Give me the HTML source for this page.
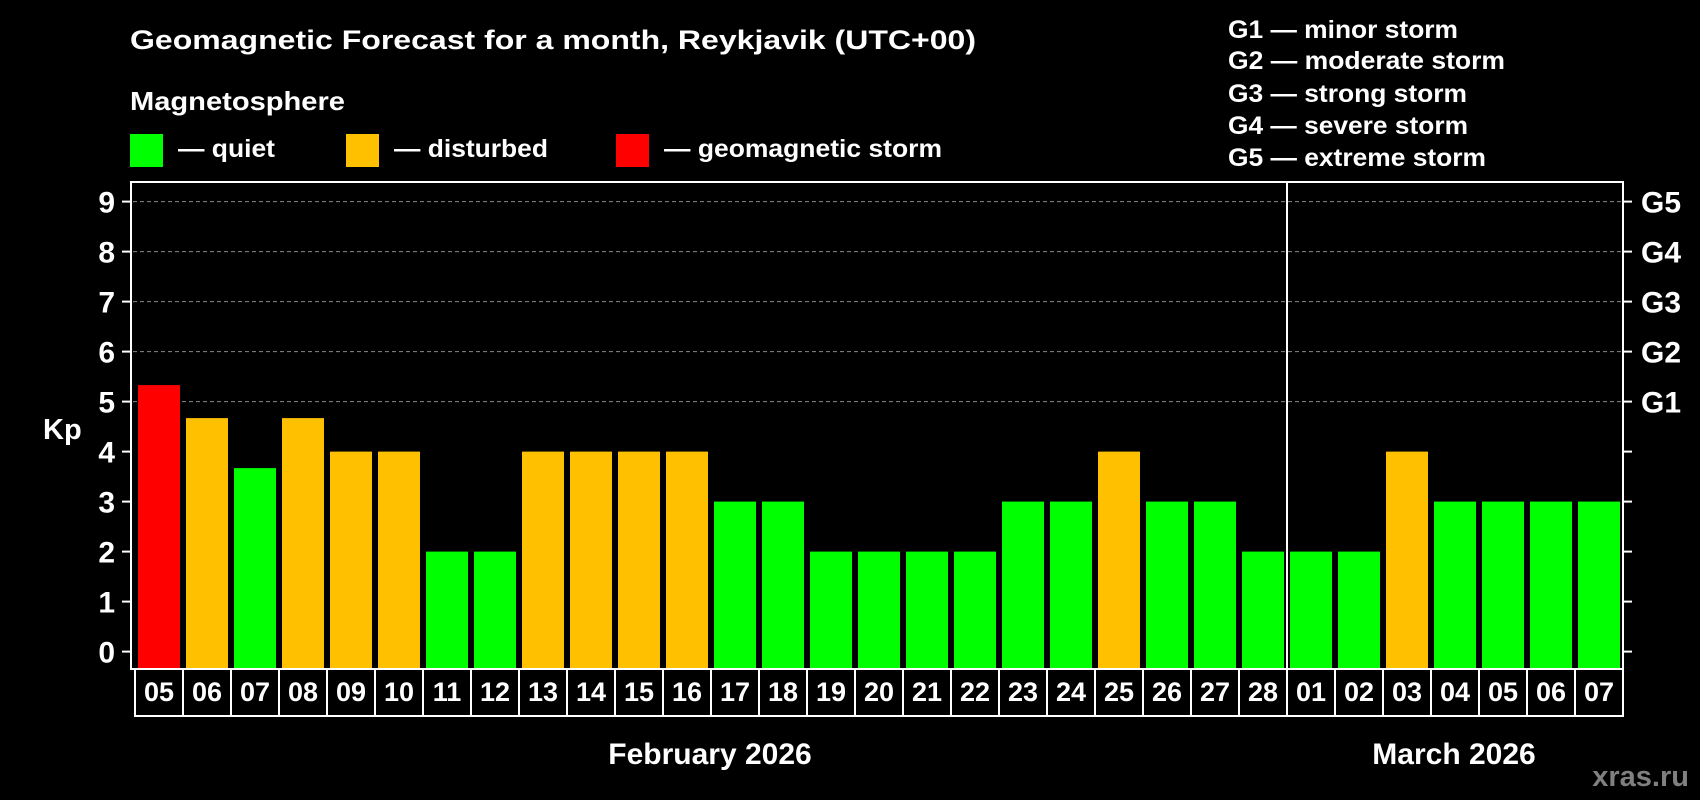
<!DOCTYPE html>
<html><head><meta charset="utf-8"><style>html,body{margin:0;padding:0;background:#000;}svg{display:block}</style></head>
<body>
<svg width="1700" height="800" xmlns="http://www.w3.org/2000/svg" font-family="Liberation Sans, Arial, sans-serif" font-weight="bold" fill="#fff">
<rect width="1700" height="800" fill="#000"/>
<text x="130" y="49" font-size="27" textLength="846" lengthAdjust="spacingAndGlyphs">Geomagnetic Forecast for a month, Reykjavik (UTC+00)</text>
<text x="130" y="110" font-size="26" textLength="215" lengthAdjust="spacingAndGlyphs">Magnetosphere</text>
<rect x="130" y="134" width="33" height="33" fill="#00ff00"/>
<text x="178" y="157" font-size="25" textLength="97" lengthAdjust="spacingAndGlyphs">— quiet</text>
<rect x="346" y="134" width="33" height="33" fill="#ffc000"/>
<text x="394" y="157" font-size="25" textLength="154" lengthAdjust="spacingAndGlyphs">— disturbed</text>
<rect x="616" y="134" width="33" height="33" fill="#ff0000"/>
<text x="664" y="157" font-size="25" textLength="278" lengthAdjust="spacingAndGlyphs">— geomagnetic storm</text>
<g font-size="25">
<text x="1228" y="38" textLength="230" lengthAdjust="spacingAndGlyphs">G1 — minor storm</text>
<text x="1228" y="69" textLength="277" lengthAdjust="spacingAndGlyphs">G2 — moderate storm</text>
<text x="1228" y="102" textLength="239" lengthAdjust="spacingAndGlyphs">G3 — strong storm</text>
<text x="1228" y="134" textLength="240" lengthAdjust="spacingAndGlyphs">G4 — severe storm</text>
<text x="1228" y="166" textLength="258" lengthAdjust="spacingAndGlyphs">G5 — extreme storm</text>
</g>
<g id="grid" stroke="#888" stroke-width="1" stroke-dasharray="4,3"></g>
<g id="bars"></g>
<g stroke="#fff" stroke-width="2" fill="none">
<rect x="131" y="182" width="1492" height="487"/>
<line x1="1287" y1="182" x2="1287" y2="669"/>
</g>
<g id="axes" stroke="#fff" stroke-width="2"></g>
<g id="labels" font-size="30"></g>
<g id="days" font-size="27" text-anchor="middle"></g>
<text x="43" y="439" font-size="29">Kp</text>
<text x="710" y="764" font-size="30" text-anchor="middle">February 2026</text>
<text x="1454" y="764" font-size="30" text-anchor="middle">March 2026</text>
<text x="1689" y="786" font-size="29" text-anchor="end" fill="#808080">xras.ru</text>
<script>
var ns="http://www.w3.org/2000/svg";
var vals=[5.33,4.67,3.67,4.67,4,4,2,2,4,4,4,4,3,3,2,2,2,2,3,3,4,3,3,2,2,2,4,3,3,3,3];
var days=["05","06","07","08","09","10","11","12","13","14","15","16","17","18","19","20","21","22","23","24","25","26","27","28","01","02","03","04","05","06","07"];
function el(t,a,p,txt){var e=document.createElementNS(ns,t);for(var k in a)e.setAttribute(k,a[k]);if(txt)e.textContent=txt;document.getElementById(p).appendChild(e);}
var y0=651.6,u=50;
vals.forEach(function(v,i){var c=v>=5?"#ff0000":(v>=4?"#ffc000":"#00ff00");var top=y0-v*u;
el("rect",{x:138+48*i,y:top,width:42,height:669-top,fill:c},"bars");
el("text",{x:159+48*i,y:701},"days",days[i]);
el("line",{x1:135+48*i,y1:669,x2:135+48*i,y2:717},"axes");});
el("line",{x1:1623,y1:669,x2:1623,y2:717},"axes");
el("line",{x1:134,y1:716,x2:1624,y2:716},"axes");
for(var k=0;k<=9;k++){var y=y0-k*u;
if(k>=5)el("line",{x1:133,x2:1622,y1:y,y2:y},"grid");
el("line",{x1:122,y1:y,x2:131,y2:y},"axes");
el("line",{x1:1623,y1:y,x2:1632,y2:y},"axes");
el("text",{x:115,y:y+11,"text-anchor":"end"},"labels",""+k);
if(k>=5)el("text",{x:1641,y:y+11},"labels","G"+(k-4));}
</script>
</svg>
</body></html>
